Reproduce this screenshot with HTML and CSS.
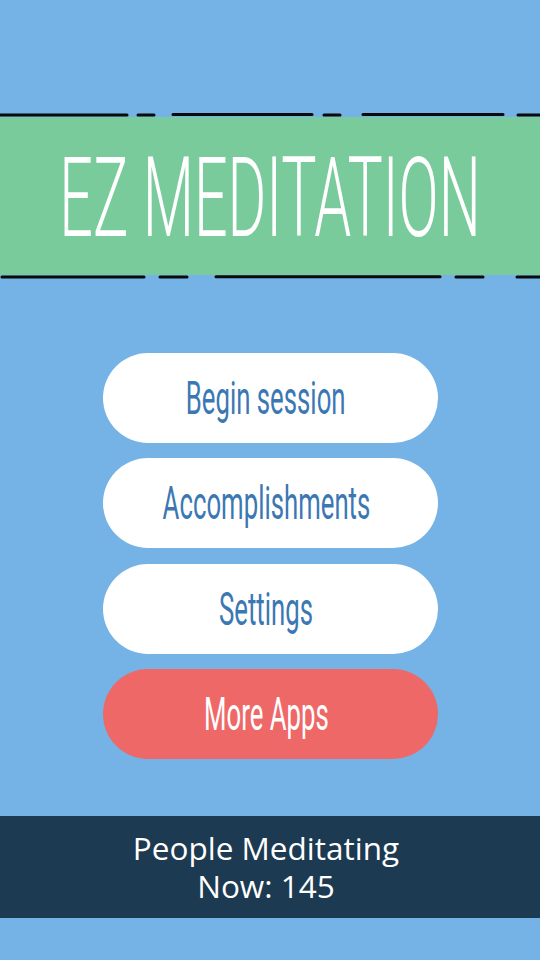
FILE: index.html
```html
<!DOCTYPE html>
<html lang="en">
<head>
<meta charset="utf-8">
<title>EZ Meditation</title>
<link rel="stylesheet" href="styles.css">
</head>
<body>
<div class="screen">
  <header class="banner">
    <svg class="dashes" width="540" height="4" viewBox="0 0 540 4" aria-hidden="true">
      <g stroke="#0b0b0b" stroke-width="3" stroke-linecap="round">
        <line x1="0" y1="2" x2="127" y2="2"/>
        <line x1="138" y1="2" x2="154" y2="2"/>
        <line x1="173" y1="1.6" x2="312" y2="1.6"/>
        <line x1="324" y1="2" x2="340" y2="2"/>
        <line x1="363" y1="1.6" x2="503" y2="1.6"/>
        <line x1="518" y1="2" x2="540" y2="2"/>
      </g>
    </svg>
    <div class="band">
      <h1 class="title"><span class="squeeze title-text">EZ MEDITATION</span></h1>
    </div>
    <svg class="dashes" width="540" height="4" viewBox="0 0 540 4" aria-hidden="true">
      <g stroke="#0b0b0b" stroke-width="3" stroke-linecap="round">
        <line x1="2" y1="2" x2="144" y2="2"/>
        <line x1="160" y1="2" x2="187" y2="2"/>
        <line x1="216" y1="1.8" x2="440" y2="1.8"/>
        <line x1="456" y1="2" x2="483" y2="2"/>
        <line x1="517" y1="2" x2="540" y2="2"/>
      </g>
    </svg>
  </header>

  <nav class="menu">
    <button class="pill"><span class="squeeze label">Begin session</span></button>
    <button class="pill"><span class="squeeze label">Accomplishments</span></button>
    <button class="pill"><span class="squeeze label">Settings</span></button>
    <button class="pill pill-red"><span class="squeeze label">More Apps</span></button>
  </nav>

  <footer class="status">
    <div class="status-text">
      <span class="status-line">People Meditating</span>
      <span class="status-line">Now: 145</span>
    </div>
  </footer>
</div>
</body>
</html>
```

FILE: styles.css
```css
* {
  box-sizing: border-box;
}

html, body {
  margin: 0;
  padding: 0;
}

body {
  background: #75b2e5;
  width: 540px;
  height: 960px;
  overflow: hidden;
}

.screen {
  display: flex;
  flex-direction: column;
  align-items: center;
  padding-top: 113px;
}

.banner {
  width: 540px;
  display: flex;
  flex-direction: column;
}

.dashes {
  display: block;
}

.band {
  height: 158px;
  background: #79cb9b;
  display: flex;
  align-items: center;
  justify-content: center;
  overflow: hidden;
}

.title {
  margin: 0;
  font-family: Roboto, "Liberation Sans", sans-serif;
  font-weight: 300;
  font-size: 112px;
  line-height: 1;
  color: #ffffff;
  white-space: nowrap;
  display: flex;
  justify-content: center;
  width: 540px;
}

.squeeze {
  display: inline-block;
  white-space: nowrap;
}

.title-text {
  transform: scaleX(0.528);
  margin: 0 -200px;
  padding-top: 4px;
}

.menu {
  margin-top: 74px;
  display: flex;
  flex-direction: column;
  gap: 15.3px;
}

.pill {
  width: 335px;
  height: 90px;
  border: none;
  border-radius: 45px;
  background: #ffffff;
  color: #3b78b3;
  display: flex;
  align-items: center;
  justify-content: center;
  padding: 0 8px 0 0;
  overflow: hidden;
  font-family: Roboto, "Liberation Sans", sans-serif;
  font-weight: 400;
  font-size: 46px;
  line-height: 1;
}

.pill-red {
  background: #ef6868;
  color: #ffffff;
}

.label {
  transform: scaleX(0.56);
  margin: 0 -80px;
}

.status {
  margin-top: 57px;
  width: 540px;
  height: 102px;
  background: #1c3a51;
  display: flex;
  align-items: center;
  justify-content: center;
  padding-right: 8px;
}

.status-text {
  display: flex;
  flex-direction: column;
  align-items: center;
  font-family: "Open Sans", "Noto Sans", sans-serif;
  font-size: 31.5px;
  color: #ffffff;
}

.status-line {
  display: block;
  height: 38px;
  line-height: 38px;
  white-space: nowrap;
}
```
